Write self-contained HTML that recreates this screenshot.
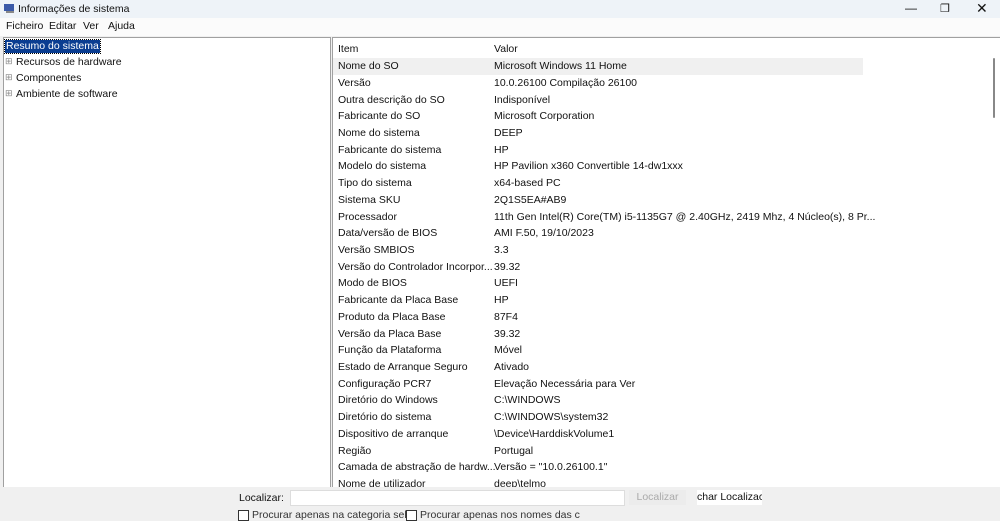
<!DOCTYPE html><html><head><style>
body{margin:0;width:1000px;height:516px;overflow:hidden;background:#f0f0f0;font-family:"Liberation Sans",sans-serif;font-size:10.5px;color:#111;position:relative}
.a{position:absolute;white-space:nowrap}
#title{left:0;top:0;width:1000px;height:18px;background:#eef3f8}
#menu{left:0;top:18px;width:1000px;height:18px;background:#fbfbfb}
#left{left:3px;top:37px;width:326px;height:450px;background:#fff;border:1px solid #a0a0a0}
#right{left:332px;top:37px;width:667px;height:450px;background:#fff;border:1px solid #a0a0a0;overflow:hidden}
.r{position:absolute;left:0;width:530px;height:16.7px;line-height:16.7px;margin-top:1px}
.r span{position:absolute;left:5px}.r b{font-weight:normal;position:absolute;left:161px}
</style></head><body>
<div class="a" id="title"></div>
<svg class="a" style="left:3px;top:3px" width="12" height="11"><rect x="1" y="1" width="10" height="7" fill="#3b5aa8"/><rect x="3" y="8" width="8" height="2" fill="#888"/></svg>
<div class="a" style="left:18px;top:3px">Informações de sistema</div>
<div class="a" style="left:905px;top:1px;font-size:12px">—</div>
<div class="a" style="left:940px;top:2px;font-size:11px">❐</div>
<div class="a" style="left:976px;top:0px;font-size:14px">✕</div>
<div class="a" id="menu"></div>
<div class="a" style="left:6px;top:20px">Ficheiro</div>
<div class="a" style="left:49px;top:20px">Editar</div>
<div class="a" style="left:83px;top:20px">Ver</div>
<div class="a" style="left:108px;top:20px">Ajuda</div>
<div class="a" id="left"></div>
<div class="a" style="left:5px;top:40px;background:#0a3d91;color:#fff;padding:0 1px;line-height:13px;outline:1px dotted #000">Resumo do sistema</div>
<div class="a" style="left:5px;top:56px;color:#888;font-size:9px">⊞</div><div class="a" style="left:16px;top:56px">Recursos de hardware</div>
<div class="a" style="left:5px;top:72px;color:#888;font-size:9px">⊞</div><div class="a" style="left:16px;top:72px">Componentes</div>
<div class="a" style="left:5px;top:88px;color:#888;font-size:9px">⊞</div><div class="a" style="left:16px;top:88px">Ambiente de software</div>
<div class="a" id="right">
<div class="r" style="top:2px"><span>Item</span><b>Valor</b></div>
<div class="r" style="top:19px;background:#f0f0f0"><span>Nome do SO</span><b>Microsoft Windows 11 Home</b></div>
<div class="r" style="top:36px"><span>Versão</span><b>10.0.26100 Compilação 26100</b></div>
<div class="r" style="top:53px"><span>Outra descrição do SO</span><b>Indisponível</b></div>
<div class="r" style="top:69px"><span>Fabricante do SO</span><b>Microsoft Corporation</b></div>
<div class="r" style="top:86px"><span>Nome do sistema</span><b>DEEP</b></div>
<div class="r" style="top:103px"><span>Fabricante do sistema</span><b>HP</b></div>
<div class="r" style="top:119px"><span>Modelo do sistema</span><b>HP Pavilion x360 Convertible 14-dw1xxx</b></div>
<div class="r" style="top:136px"><span>Tipo do sistema</span><b>x64-based PC</b></div>
<div class="r" style="top:153px"><span>Sistema SKU</span><b>2Q1S5EA#AB9</b></div>
<div class="r" style="top:170px"><span>Processador</span><b>11th Gen Intel(R) Core(TM) i5-1135G7 @ 2.40GHz, 2419 Mhz, 4 Núcleo(s), 8 Pr...</b></div>
<div class="r" style="top:186px"><span>Data/versão de BIOS</span><b>AMI F.50, 19/10/2023</b></div>
<div class="r" style="top:203px"><span>Versão SMBIOS</span><b>3.3</b></div>
<div class="r" style="top:220px"><span>Versão do Controlador Incorpor...</span><b>39.32</b></div>
<div class="r" style="top:236px"><span>Modo de BIOS</span><b>UEFI</b></div>
<div class="r" style="top:253px"><span>Fabricante da Placa Base</span><b>HP</b></div>
<div class="r" style="top:270px"><span>Produto da Placa Base</span><b>87F4</b></div>
<div class="r" style="top:287px"><span>Versão da Placa Base</span><b>39.32</b></div>
<div class="r" style="top:303px"><span>Função da Plataforma</span><b>Móvel</b></div>
<div class="r" style="top:320px"><span>Estado de Arranque Seguro</span><b>Ativado</b></div>
<div class="r" style="top:337px"><span>Configuração PCR7</span><b>Elevação Necessária para Ver</b></div>
<div class="r" style="top:353px"><span>Diretório do Windows</span><b>C:\WINDOWS</b></div>
<div class="r" style="top:370px"><span>Diretório do sistema</span><b>C:\WINDOWS\system32</b></div>
<div class="r" style="top:387px"><span>Dispositivo de arranque</span><b>\Device\HarddiskVolume1</b></div>
<div class="r" style="top:404px"><span>Região</span><b>Portugal</b></div>
<div class="r" style="top:420px"><span>Camada de abstração de hardw...</span><b>Versão = "10.0.26100.1"</b></div>
<div class="r" style="top:437px"><span>Nome de utilizador</span><b>deep\telmo</b></div>
<div style="position:absolute;left:660px;top:20px;width:2px;height:60px;background:#888;border-radius:1px"></div>
</div>
<div class="a" style="left:0;top:487px;width:1000px;height:29px;background:#f0f0f0"></div>
<div class="a" style="left:239px;top:492px">Localizar:</div>
<div class="a" style="left:290px;top:490px;width:333px;height:14px;background:#fff;border:1px solid #ddd"></div>
<div class="a" style="left:629px;top:490px;width:57px;height:15px;background:#ececec;color:#aaa;text-align:center;line-height:15px">Localizar</div>
<div class="a" style="left:697px;top:490px;width:65px;height:15px;background:#fff;line-height:15px;overflow:hidden">char Localizac</div>
<div class="a" style="left:238px;top:510px;width:9px;height:9px;border:1px solid #333;background:#fff"></div>
<div class="a" style="left:252px;top:509px;color:#333">Procurar apenas na categoria sel:</div>
<div class="a" style="left:406px;top:510px;width:9px;height:9px;border:1px solid #333;background:#fff"></div>
<div class="a" style="left:420px;top:509px;color:#333">Procurar apenas nos nomes das c</div>
</body></html>
